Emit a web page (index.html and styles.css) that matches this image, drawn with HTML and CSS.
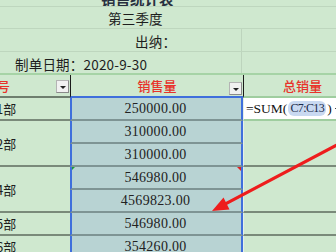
FILE: index.html
```html
<!DOCTYPE html>
<html lang="zh">
<head>
<meta charset="utf-8">
<title>销售统计表</title>
<link rel="stylesheet" href="styles.css">
</head>
<body>
<div class="sheet">
  <div class="top">
    <div class="trow title-row"><span class="title">销售统计表</span></div>
    <div class="trow r2"><span class="season">第三季度</span></div>
    <div class="trow r3">
      <div class="tl"><span class="cashier">出纳：</span></div>
      <div class="tr"></div>
    </div>
    <div class="trow r4">
      <div class="tl"><span class="date">制单日期：2020-9-30</span></div>
      <div class="tr"></div>
    </div>
  </div>

  <div class="grid">
    <div class="h a"><span class="htext cut">号</span><span class="dd"></span></div>
    <div class="h c"><span class="htext mid">销售量</span><span class="dd"></span></div>
    <div class="h d"><span class="htext dtitle">总销量</span></div>

    <div class="a"><span class="dep">1部</span></div>
    <div class="c"><span class="num">250000.00</span></div>
    <div class="d formula"><span class="eq">=SUM(</span><span class="ref">C7:C13</span><span class="eq">)</span><span class="caret"></span></div>

    <div class="a span2"><span class="dep">2部</span></div>
    <div class="c"><span class="num">310000.00</span></div>
    <div class="d span2"></div>
    <div class="c"><span class="num">310000.00</span></div>

    <div class="a span2"><span class="dep">4部</span></div>
    <div class="c marked"><span class="num">546980.00</span></div>
    <div class="d span2"></div>
    <div class="c"><span class="num">4569823.00</span></div>

    <div class="a"><span class="dep">5部</span></div>
    <div class="c"><span class="num">546980.00</span></div>
    <div class="d"></div>

    <div class="a"><span class="dep">6部</span></div>
    <div class="c"><span class="num">354260.00</span></div>
    <div class="d"></div>
  </div>

  <svg class="arrow" width="336" height="252" viewBox="0 0 336 252">
    <line x1="336" y1="145.5" x2="225" y2="204.2" stroke="#ee1d1d" stroke-width="3.2" stroke-linecap="round"/>
    <polygon points="212,211 229.5,209.5 223.5,197.5" fill="#ee1d1d"/>
  </svg>
</div>
</body>
</html>
```

FILE: styles.css
```css
html, body {
  margin: 0;
  padding: 0;
}
body {
  width: 336px;
  height: 252px;
  overflow: hidden;
  background: #cfe8cf;
  font-family: "Noto Sans CJK SC", sans-serif;
  color: #1e1e1e;
}
.sheet {
  position: relative;
  width: 336px;
  height: 252px;
  overflow: hidden;
}

/* ---------- top title area ---------- */
.trow {
  display: flex;
  border-bottom: 1px solid #bed6be;
  box-sizing: content-box;
}
.title-row {
  height: 6px;
  overflow: hidden;
  align-items: flex-end;
  padding-left: 101px;
}
.title {
  font-size: 14.5px;
  line-height: 15px;
  font-weight: 700;
  color: #283040;
  margin-bottom: 0;
}
.r2 {
  height: 21px;
  align-items: center;
  padding-left: 108px;
}
.season {
  font-size: 13.5px;
  line-height: 21px;
  padding-top: 2px;
}
.r3 {
  height: 22px;
}
.r4 {
  height: 21px;
  border-bottom: 2px solid #a6d3a6;
}
.tl {
  width: 242px;
  display: flex;
  align-items: center;
  border-right: 1px solid #bdd4bd;
  box-sizing: border-box;
}
.tr {
  flex: 1;
}
.cashier {
  font-size: 13.5px;
  padding-left: 135px;
  padding-top: 2px;
}
.date {
  font-size: 13.5px;
  padding-left: 15px;
  padding-top: 2px;
  white-space: nowrap;
}
.date, .season, .cashier {
  letter-spacing: 0.2px;
}

/* ---------- table grid ---------- */
.grid {
  display: grid;
  grid-template-columns: 70px 173px 93px;
  grid-auto-rows: 23px;
}
.grid > div {
  box-sizing: border-box;
  display: flex;
  align-items: center;
  position: relative;
  overflow: hidden;
}
.a { grid-column: 1; }
.c { grid-column: 2; }
.d { grid-column: 3; }
.span2 { grid-row: span 2; }

.h {
  border-bottom: 2px solid #6e7e6e;
}
.h.c {
  border-left: 1px solid #1a1a1a;
  border-bottom-color: #3f6fdc;
  justify-content: center;
}
.h.d {
  border-left: 1px solid #1a1a1a;
  border-bottom-color: #9fcd9f;
}
.h.a {
  justify-content: space-between;
}
.htext {
  color: #e8322a;
  font-size: 13px;
  font-weight: 500;
  white-space: nowrap;
}
.cut {
  margin-left: -3px;
}
.dtitle {
  margin-left: 39px;
}
.dd {
  width: 11px;
  height: 11px;
  margin-top: 2px;
  margin-right: 1px;
  background: #f1f1f1;
  border: 1px solid #b4b4b4;
  border-right-color: #8a8a8a;
  border-bottom-color: #8a8a8a;
  display: flex;
  align-items: center;
  justify-content: center;
}
.dd::after {
  content: "";
  border-left: 3px solid transparent;
  border-right: 3px solid transparent;
  border-top: 3px solid #222;
  margin-top: 2px;
}
.h.c .dd {
  position: absolute;
  right: 1px;
  top: 7px;
  margin: 0;
}

.a:not(.h) {
  border-bottom: 2px solid #7a8a7a;
}
.dep {
  font-size: 13px;
  margin-left: -4px;
  white-space: nowrap;
}

.c:not(.h) {
  background: #b8d3d3;
  border-left: 2px solid #3f6fdc;
  border-right: 2px solid #3f6fdc;
  border-bottom: 2px solid #7e9494;
  justify-content: center;
}
.num {
  font-family: "Liberation Serif", serif;
  font-size: 14px;
  letter-spacing: 0.3px;
  color: #222;
  padding-right: 2px;
  padding-top: 1px;
}
.marked::before {
  content: "";
  position: absolute;
  left: 0;
  top: 0;
  border-top: 3px solid #1e9a3a;
  border-right: 3px solid transparent;
}
.marked::after {
  content: "";
  position: absolute;
  right: 0;
  top: 0;
  border-top: 4px solid #e02020;
  border-left: 4px solid transparent;
}

.d:not(.h) {
  border-bottom: 2px solid #7a8a7a;
  border-left: 1px solid #e6efe6;
}
.formula {
  background: #ffffff;
  border-bottom-color: #9fcd9f !important;
  padding-left: 2px;
  white-space: nowrap;
}
.eq {
  font-family: "Liberation Serif", serif;
  font-size: 13.5px;
  color: #111;
}
.ref {
  font-family: "Liberation Serif", serif;
  font-size: 12px;
  letter-spacing: -0.6px;
  color: #1a2a4a;
  background: #c9d9f1;
  border-radius: 6px;
  padding: 0 2px 0 2px;
  margin: 0 1px;
}
.caret {
  width: 4px;
  height: 1px;
  background: #444;
  margin-left: 3px;
}

/* annotation arrow lies over the table */
.arrow {
  position: absolute;
  left: 0;
  top: 0;
  pointer-events: none;
}
```
